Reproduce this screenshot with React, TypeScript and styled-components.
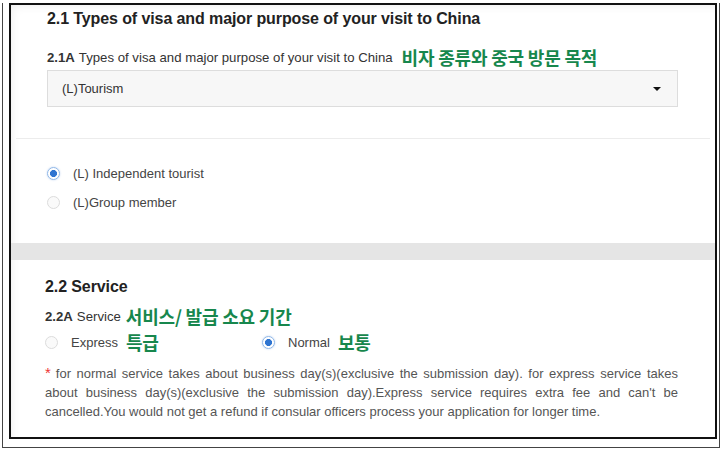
import React, { useState } from "react";
import styled, { createGlobalStyle } from "styled-components";

const GlobalStyle = createGlobalStyle`
  html, body {
    margin: 0;
    padding: 0;
    background: #fff;
  }
  body {
    font-family: "Liberation Sans", Arial, sans-serif;
    color: #333;
  }
`;

const Frame = styled.div`
  margin: 3px 0 0 2px;
  width: 716px;
  height: 444px;
  border: 1px solid #444;
  border-top: none;
`;
const Box = styled.div`
  margin-left: 6px;
  width: 704px;
  height: 432px;
  border: 2px solid #111;
  background: #fff;
  box-shadow: inset 8px 8px 12px -10px rgba(0, 0, 0, 0.12);
  display: flex;
  flex-direction: column;
  overflow: hidden;
`;
const Panel = styled.div`
  padding: 0 5px;
`;
const Body = styled.div<{ $left?: number }>`
  padding: 0 32px 0 ${(p) => p.$left ?? 31}px;
`;
const Heading = styled.h2<{ $top: number }>`
  margin: ${(p) => p.$top}px 0 0;
  font-size: 16px;
  line-height: 20px;
  font-weight: 700;
  color: #222;
  letter-spacing: -0.1px;
`;
const Label = styled.div<{ $top: number }>`
  margin-top: ${(p) => p.$top}px;
  height: 20px;
  display: flex;
  align-items: center;
  font-size: 13.2px;
  color: #333;
  b {
    font-weight: 700;
    margin-right: 4px;
  }
`;
const Ko = styled.span<{ $gap?: number }>`
  font-family: "Noto Sans CJK KR", sans-serif;
  font-weight: 700;
  font-size: 18px;
  line-height: 20px;
  color: #17874d;
  margin-left: ${(p) => p.$gap ?? 8}px;
  letter-spacing: -0.2px;
`;
const Select = styled.div`
  margin-top: 3px;
  height: 37px;
  box-sizing: border-box;
  border: 1px solid #ddd;
  background: #f7f7f7;
  display: flex;
  align-items: center;
  justify-content: space-between;
  padding: 0 16px 0 14px;
  font-size: 13px;
  color: #333;
`;
const Caret = styled.span`
  width: 0;
  height: 0;
  border-left: 4px solid transparent;
  border-right: 4px solid transparent;
  border-top: 4px solid #111;
`;
const Divider = styled.div`
  margin-top: 31px;
  height: 1px;
  background: #ececec;
`;
const RadioList = styled.div`
  margin-top: 24px;
  display: flex;
  flex-direction: column;
  gap: 9px;
`;
const RadioRow = styled.div<{ $top?: number }>`
  margin-top: ${(p) => p.$top ?? 0}px;
  display: flex;
  align-items: center;
  height: 20px;
`;
const RadioItem = styled.label<{ $width?: number }>`
  display: flex;
  align-items: center;
  height: 20px;
  width: ${(p) => (p.$width ? `${p.$width}px` : "auto")};
  font-size: 13px;
  color: #444;
  cursor: pointer;
`;
const Dot = styled.span<{ $on: boolean }>`
  width: 13px;
  height: 13px;
  box-sizing: border-box;
  border-radius: 50%;
  margin: 0 13px 0 0;
  border: 1px solid ${(p) => (p.$on ? "#8fb7e8" : "#dcdcdc")};
  background: ${(p) =>
    p.$on ? "radial-gradient(circle, #2f74d0 0 3.2px, #fff 3.8px)" : "#fafafa"};
  box-shadow: ${(p) => (p.$on ? "0 0 2px rgba(60,120,210,0.35)" : "none")};
`;
const Band = styled.div`
  margin-top: 31px;
  height: 17px;
  background: #e5e5e5;
`;
const Note = styled.p`
  margin: 12px 0 0;
  font-size: 13px;
  line-height: 19px;
  color: #555;
  text-align: justify;
`;
const Star = styled.span`
  color: #e33;
  font-size: 15px;
  line-height: 0;
  margin-right: 5px;
`;

const Radio = ({
  on,
  label,
  ko,
  width,
  onPick,
}: {
  on: boolean;
  label: string;
  ko?: string;
  width?: number;
  onPick: () => void;
}) => (
  <RadioItem $width={width} onClick={onPick}>
    <Dot $on={on} />
    {label}
    {ko && <Ko $gap={8}>{ko}</Ko>}
  </RadioItem>
);

const App = () => {
  const [tourist, setTourist] = useState("independent");
  const [service, setService] = useState("normal");
  return (
    <>
      <GlobalStyle />
      <Frame>
        <Box>
          <Panel>
            <Body>
              <Heading $top={4}>
                2.1 Types of visa and major purpose of your visit to China
              </Heading>
              <Label $top={18}>
                <b>2.1A</b>Types of visa and major purpose of your visit to China
                <Ko $gap={9}>비자 종류와 중국 방문 목적</Ko>
              </Label>
              <Select>
                (L)Tourism
                <Caret />
              </Select>
            </Body>
            <Divider />
            <Body>
              <RadioList>
                <Radio
                  on={tourist === "independent"}
                  label="(L) Independent tourist"
                  onPick={() => setTourist("independent")}
                />
                <Radio
                  on={tourist === "group"}
                  label="(L)Group member"
                  onPick={() => setTourist("group")}
                />
              </RadioList>
            </Body>
          </Panel>
          <Band />
          <Panel>
            <Body $left={29}>
              <Heading $top={17}>2.2 Service</Heading>
              <Label $top={9}>
                <b>2.2A</b>Service
                <Ko $gap={5}>서비스/ 발급 소요 기간</Ko>
              </Label>
              <RadioRow $top={6}>
                <Radio
                  width={217}
                  on={service === "express"}
                  label="Express"
                  ko="특급"
                  onPick={() => setService("express")}
                />
                <Radio
                  on={service === "normal"}
                  label="Normal"
                  ko="보통"
                  onPick={() => setService("normal")}
                />
              </RadioRow>
              <Note>
                <Star>*</Star>for normal service takes about business
                day(s)(exclusive the submission day). for express service takes
                about business day(s)(exclusive the submission day).Express
                service requires extra fee and can't be cancelled.You would not
                get a refund if consular officers process your application for
                longer time.
              </Note>
            </Body>
          </Panel>
        </Box>
      </Frame>
    </>
  );
};

export default App;
